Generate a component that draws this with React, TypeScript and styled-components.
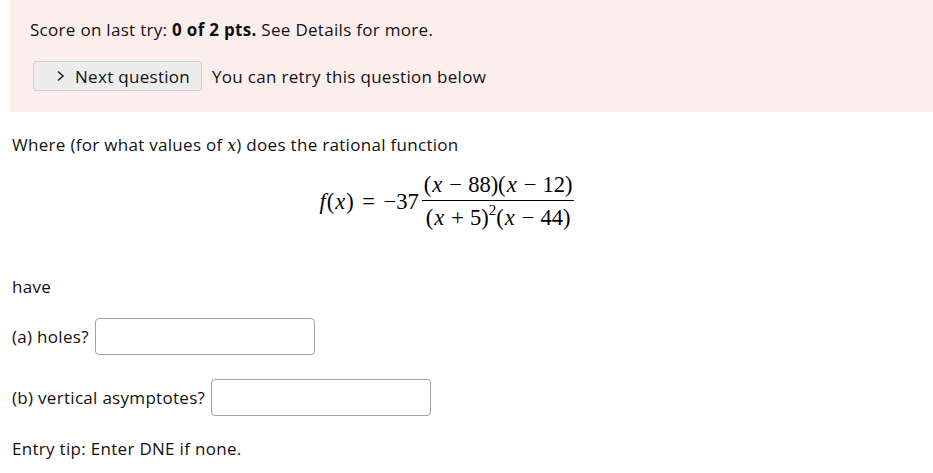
import React from "react";
import styled, { createGlobalStyle } from "styled-components";

const Global = createGlobalStyle`
  html, body { margin: 0; padding: 0; background: #fff; }
  body { font-family: "Open Sans", "Noto Sans", sans-serif; font-size: 17px; letter-spacing: 0.3px; color: #111; }
`;

const Page = styled.div`
  padding: 0 0 0 10px;
  display: flex;
  flex-direction: column;
`;

const Notice = styled.div`
  background: #fdeeee;
  padding: 19px 20px 21px 20px;
  display: flex;
  flex-direction: column;
  gap: 20px;
`;

const ScoreLine = styled.div`
  line-height: 22px;
`;

const ActionRow = styled.div`
  display: flex;
  align-items: center;
  gap: 10px;
  padding-left: 3px;
`;

const NextButton = styled.button`
  font: inherit;
  letter-spacing: inherit;
  color: #111;
  background: #ececec;
  border: 1px solid #cfcfcf;
  border-radius: 3px;
  height: 30px;
  width: 169px;
  padding: 0 0 0 22px;
  display: flex;
  align-items: center;
  gap: 10px;
  white-space: nowrap;
`;

const Body = styled.div`
  padding: 0 2px;
  display: flex;
  flex-direction: column;
`;

const Para = styled.p<{ $top?: number }>`
  margin: ${(p) => p.$top ?? 0}px 0 0 0;
  line-height: 22px;
`;

const MathI = styled.span`
  font-family: "DejaVu Serif", "Liberation Serif", serif;
  font-style: italic;
  font-size: 16px;
  letter-spacing: 0;
`;

const Display = styled.div`
  margin-top: 17px;
  display: flex;
  justify-content: center;
  align-items: center;
  padding-right: 50px;
  font-family: "Liberation Serif", "DejaVu Serif", serif;
  font-size: 22.5px;
  letter-spacing: 0;
  color: #000;
`;

const Var = styled.span`
  font-style: italic;
  margin: 0 1px;
`;

const Bin = styled.span`
  margin: 0 0.27em;
`;

const Rel = styled.span`
  margin: 0 0.38em;
`;

const Frac = styled.span`
  display: inline-flex;
  flex-direction: column;
  align-items: center;
  margin-left: 3px;
  margin-top: -2px;
`;

const Num = styled.span`
  padding: 0 2px 3px;
  line-height: 25px;
  border-bottom: 1px solid #000;
`;

const Den = styled.span`
  padding: 4px 2px 0;
  line-height: 25px;
`;

const Sup = styled.sup`
  font-size: 15px;
  vertical-align: 10px;
  line-height: 0;
`;

const FieldRow = styled.div<{ $top: number }>`
  margin-top: ${(p) => p.$top}px;
  display: flex;
  align-items: center;
  gap: 6px;
`;

const Input = styled.input`
  width: 220px;
  height: 37px;
  box-sizing: border-box;
  border: 1px solid #a0a0a0;
  border-radius: 4px;
  background: #fff;
`;

const Chevron = () => (
  <svg width="9" height="12" viewBox="0 0 9 12">
    <path d="M2 1.5 L7 6 L2 10.5" fill="none" stroke="#222" strokeWidth="1.6" />
  </svg>
);

export default function App() {
  return (
    <>
      <Global />
      <Page>
        <Notice>
          <ScoreLine>
            Score on last try: <b>0 of 2 pts.</b> See Details for more.
          </ScoreLine>
          <ActionRow>
            <NextButton>
              <Chevron />
              Next question
            </NextButton>
            <span>You can retry this question below</span>
          </ActionRow>
        </Notice>
        <Body>
          <Para $top={22}>
            Where (for what values of <MathI>x</MathI>) does the rational function
          </Para>
          <Display>
            <Var>f</Var>(<Var>x</Var>)<Rel>=</Rel>−37
            <Frac>
              <Num>
                (<Var>x</Var>
                <Bin>−</Bin>88)(<Var>x</Var>
                <Bin>−</Bin>12)
              </Num>
              <Den>
                (<Var>x</Var>
                <Bin>+</Bin>5)<Sup>2</Sup>(<Var>x</Var>
                <Bin>−</Bin>44)
              </Den>
            </Frac>
          </Display>
          <Para $top={46}>have</Para>
          <FieldRow $top={20}>
            <span>(a) holes?</span>
            <Input type="text" />
          </FieldRow>
          <FieldRow $top={24}>
            <span>(b) vertical asymptotes?</span>
            <Input type="text" />
          </FieldRow>
          <Para $top={22}>Entry tip: Enter DNE if none.</Para>
        </Body>
      </Page>
    </>
  );
}
